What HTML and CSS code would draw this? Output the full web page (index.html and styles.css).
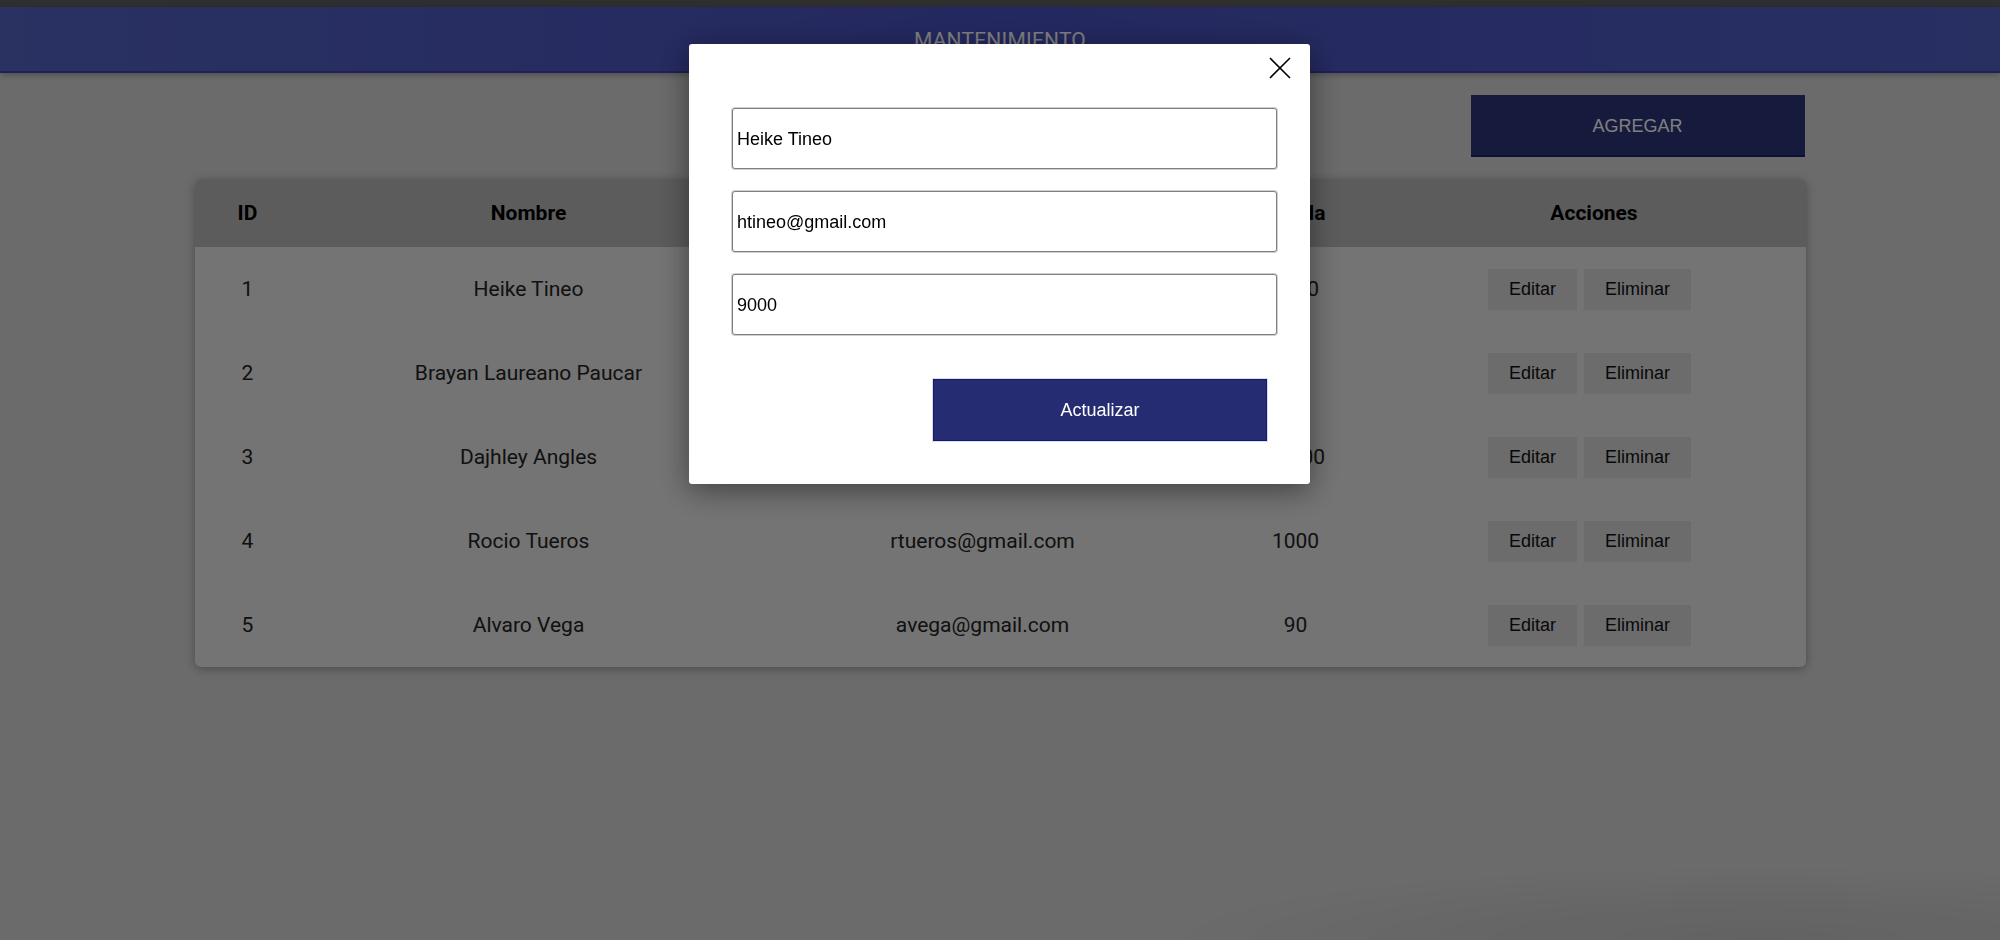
FILE: index.html
```html
<!DOCTYPE html>
<html lang="es">
<head>
<meta charset="utf-8">
<title>Mantenimiento</title>
<link rel="stylesheet" href="styles.css">
</head>
<body>
<div class="topbar"></div>
<header class="header">MANTENIMIENTO</header>
<main class="container">
  <div class="toolbar">
    <button class="btn-add">AGREGAR</button>
  </div>
  <div class="card">
    <table class="grid">
      <colgroup>
        <col class="c-id"><col class="c-name"><col class="c-mail"><col class="c-debt"><col class="c-act">
      </colgroup>
      <thead>
        <tr><th>ID</th><th>Nombre</th><th>Correo</th><th>Deuda</th><th>Acciones</th></tr>
      </thead>
      <tbody>
        <tr><td>1</td><td>Heike Tineo</td><td>htineo@gmail.com</td><td>9000</td><td class="actions"><button class="btn-row">Editar</button><button class="btn-row">Eliminar</button></td></tr>
        <tr><td>2</td><td>Brayan Laureano Paucar</td><td>blaureano@gmail.com</td><td>50</td><td class="actions"><button class="btn-row">Editar</button><button class="btn-row">Eliminar</button></td></tr>
        <tr><td>3</td><td>Dajhley Angles</td><td>dangles@gmail.com</td><td>10000</td><td class="actions"><button class="btn-row">Editar</button><button class="btn-row">Eliminar</button></td></tr>
        <tr><td>4</td><td>Rocio Tueros</td><td>rtueros@gmail.com</td><td>1000</td><td class="actions"><button class="btn-row">Editar</button><button class="btn-row">Eliminar</button></td></tr>
        <tr><td>5</td><td>Alvaro Vega</td><td>avega@gmail.com</td><td>90</td><td class="actions"><button class="btn-row">Editar</button><button class="btn-row">Eliminar</button></td></tr>
      </tbody>
    </table>
  </div>
</main>
<div class="overlay"></div>
<div class="modal">
  <button class="close" aria-label="Cerrar">
    <svg width="22" height="22" viewBox="0 0 22 22"><path d="M1 1 L21 21 M21 1 L1 21" stroke="#000" stroke-width="1.6" fill="none"/></svg>
  </button>
  <form class="form">
    <input class="field" type="text" value="Heike Tineo">
    <input class="field" type="text" value="htineo@gmail.com">
    <input class="field" type="text" value="9000">
    <button type="button" class="btn-update">Actualizar</button>
  </form>
</div>
</body>
</html>
```

FILE: styles.css
```css
html, body {
  margin: 0;
  padding: 0;
}
body {
  background: #d6d6d6;
  font-family: Roboto, "Noto Sans", sans-serif;
  min-height: 940px;
  overflow: hidden;
}
.topbar {
  height: 7px;
  background: #5e5e5e;
}
.header {
  height: 66px;
  box-sizing: border-box;
  background: linear-gradient(90deg, #5464c4 0%, #4850c0 50%, #5060c4 100%);
  border-bottom: 2px solid #3a42b0;
  color: #fff;
  font-size: 21px;
  letter-spacing: 0.2px;
  text-align: center;
  line-height: 66px;
  box-shadow: 0 2px 6px rgba(0,0,0,0.25);
}
.container {
  width: 1611px;
  margin: 0 auto;
}
.toolbar {
  display: flex;
  justify-content: flex-end;
  padding-top: 22px;
}
.btn-add {
  width: 334px;
  height: 62px;
  margin-right: 1px;
  padding: 2px 0 0 0;
  background: #2c3478;
  border: none;
  border-bottom: 2px solid #1a1f6a;
  color: #fff;
  font-family: "Liberation Sans", Arial, sans-serif;
  font-size: 18px;
}
.card {
  margin-top: 22px;
  background: #e8e8e8;
  border-radius: 6px;
  overflow: hidden;
  box-shadow: 0 2px 10px rgba(0,0,0,0.3);
}
.grid {
  width: 100%;
  border-collapse: collapse;
  table-layout: fixed;
  text-align: center;
}
.c-id { width: 106px; }
.c-name { width: 456px; }
.c-mail { width: 452px; }
.c-debt { width: 174px; }
.c-act { width: 423px; }
.grid thead tr {
  background: #b8b8b8;
  height: 68px;
}
.grid th {
  font-size: 21px;
  font-weight: 700;
  color: #000;
  padding: 0;
}
.grid tbody tr {
  height: 84px;
}
.grid td {
  font-size: 21px;
  color: #222;
  padding: 0;
}
.grid td.actions {
  padding-right: 9px;
}
.btn-row {
  height: 41px;
  padding: 0 21px;
  margin: 0;
  background: #d8d8d8;
  border: none;
  color: #111;
  font-family: "Liberation Sans", Arial, sans-serif;
  font-size: 18px;
  vertical-align: middle;
}
.btn-row + .btn-row {
  margin-left: 7px;
}
.overlay {
  position: fixed;
  inset: 0;
  background:
    radial-gradient(ellipse 30% 8% at 88% 100%, rgba(0,0,0,0.08), rgba(0,0,0,0) 100%),
    rgba(0,0,0,0.5);
  z-index: 10;
}
.modal {
  position: fixed;
  top: 44px;
  left: 689px;
  width: 621px;
  height: 440px;
  box-sizing: border-box;
  background: #fff;
  border-radius: 3px;
  box-shadow: 0 6px 30px rgba(0,0,0,0.45);
  z-index: 20;
}
.close {
  position: absolute;
  top: 13px;
  right: 19px;
  width: 22px;
  height: 22px;
  padding: 0;
  border: none;
  background: none;
  display: block;
}
.close svg { display: block; }
.form {
  display: flex;
  flex-direction: column;
  padding: 64px 33px 0 43px;
}
.field {
  height: 61px;
  box-sizing: border-box;
  margin: 0 0 22px 0;
  padding: 2px 4px 0 4px;
  border: 1px solid #808080;
  box-shadow: 0 0 0 1px #cfcfcf;
  border-radius: 3px;
  font-family: "Liberation Sans", Arial, sans-serif;
  font-size: 18px;
  color: #000;
  background: #fff;
  outline: none;
}
.btn-update {
  align-self: flex-end;
  width: 334px;
  height: 62px;
  margin: 22px 10px 0 0;
  background: #252c72;
  border: 1px solid #151b6a;
  box-shadow: 0 0 0 1px #dadce8;
  color: #fff;
  font-family: "Liberation Sans", Arial, sans-serif;
  font-size: 18px;
}
```
